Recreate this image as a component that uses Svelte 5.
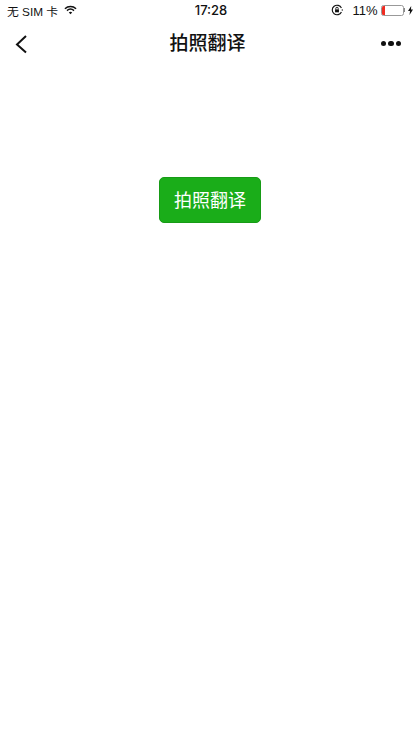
<script>
  const title = '拍照翻译';
</script>

<div class="page">
  <header class="status">
    <div class="side">
      <span class="carrier">无 SIM 卡</span>
      <svg class="wifi" width="13" height="10" viewBox="0 0 14 10">
        <path d="M1 3.6C4.4.4 9.6.4 13 3.6" fill="none" stroke="#111" stroke-width="1.6"/>
        <path d="M3.2 5.7C5.4 3.700 8.600 3.700 10.800 5.700" fill="none" stroke="#111" stroke-width="1.6"/>
        <path d="M5.2 7.6C6.300 6.700 7.700 6.700 8.800 7.600L7 9.600Z" fill="#111"/>
      </svg>
    </div>
    <span class="time">17:28</span>
    <div class="side right">
      <svg width="12" height="12" viewBox="0 0 13 13">
        <path d="M11.3 8.6A5.200 5.200 0 1 1 11.300 4.400" fill="none" stroke="#111" stroke-width="1.200"/>
        <rect x="4.400" y="5.800" width="4.200" height="3.200" fill="#111"/>
        <path d="M5.200 5.800V4.800a1.300 1.300 0 0 1 2.600 0v1" fill="none" stroke="#111"/>
        <circle cx="12.200" cy="6.500" r=".7" fill="#111"/>
      </svg>
      <span class="pct">11%</span>
      <div class="battery"><div class="level"></div></div>
      <div class="nub"></div>
      <svg class="bolt" width="5" height="9" viewBox="0 0 5 9"><path d="M3.200 0 0 5h2L1.500 9 5 3.600H3Z" fill="#111"/></svg>
    </div>
  </header>

  <nav class="nav">
    <svg width="14" height="20" viewBox="0 0 14 20">
      <path d="M12 2 3 10.500l9 8" fill="none" stroke="#111" stroke-width="2"/>
    </svg>
    <h1>{title}</h1>
    <div class="dots"><i></i><i></i><i></i></div>
  </nav>

  <main>
    <button>{title}</button>
  </main>
</div>

<style>
  :global(body) { margin: 0; background: #fff; }
  .page {
    width: 420px; height: 747px; overflow: hidden; background: #fff; color: #111;
    font-family: "Liberation Sans", "Noto Sans CJK SC", sans-serif;
  }
  .status {
    height: 20px; display: grid; grid-template-columns: 1fr auto 1fr; align-items: center;
    padding: 0 7px 0 7px; font-size: 12.500px;
  }
  .side { display: flex; align-items: center; }
  .carrier { font-size: 11.800px; }
  .wifi { margin-left: 6px; }
  .right { justify-content: flex-end; }
  .pct { margin-left: 9px; font-size: 13px; }
  .time { font-family: Inter, sans-serif; font-weight: 500; font-size: 13px; padding-left: 2px; }
  .battery {
    margin-left: 3px; width: 21px; height: 9px; border: 1px solid #999; border-radius: 2.500px; overflow: hidden;
  }
  .level { width: 3px; height: 100%; background: #f02c22; }
  .nub { width: 1.500px; height: 4px; background: #888; }
  .bolt { margin-left: 3px; }
  .nav {
    height: 47px; display: grid; grid-template-columns: 1fr auto 1fr; align-items: center;
    padding: 0 19px 0 14px;
  }
  h1 { margin: 0; font-size: 19px; font-weight: 500; line-height: 1; }
  .dots { display: flex; gap: 2px; justify-content: flex-end; }
  .dots i { width: 5.500px; height: 5.500px; border-radius: 50%; background: #111; }
  main { display: flex; justify-content: center; padding-top: 110px; }
  button {
    width: 102px; height: 46px; padding: 0 0 3px; background: #1aad19; color: #fff; border: 1px solid #179b16; border-radius: 5px;
    font: 18px "Noto Sans CJK SC", sans-serif;
  }
</style>
